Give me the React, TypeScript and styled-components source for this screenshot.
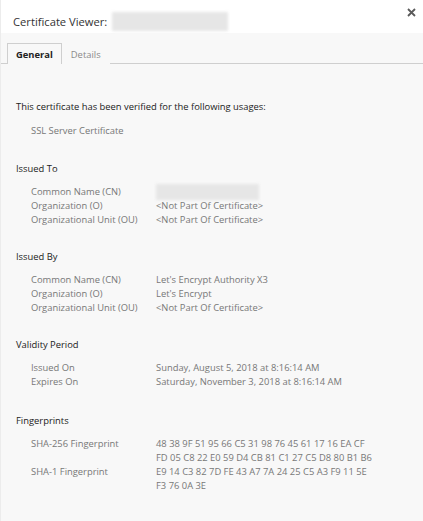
import styled, { createGlobalStyle } from 'styled-components';

const GlobalStyle = createGlobalStyle`
	html, body {
		margin: 0;
		padding: 0;
		background: #f8f8f8;
	}
	body {
		font-family: 'Open Sans', 'Noto Sans', sans-serif;
	}
`;

type Row = { label: string; value?: string; lines?: string[]; blurred?: boolean };
type Section = { title: string; rows: Row[] };

const sections: Section[] = [
	{
		title: 'Issued To',
		rows: [
			{ label: 'Common Name (CN)', blurred: true },
			{ label: 'Organization (O)', value: '<Not Part Of Certificate>' },
			{ label: 'Organizational Unit (OU)', value: '<Not Part Of Certificate>' },
		],
	},
	{
		title: 'Issued By',
		rows: [
			{ label: 'Common Name (CN)', value: "Let's Encrypt Authority X3" },
			{ label: 'Organization (O)', value: "Let's Encrypt" },
			{ label: 'Organizational Unit (OU)', value: '<Not Part Of Certificate>' },
		],
	},
	{
		title: 'Validity Period',
		rows: [
			{ label: 'Issued On', value: 'Sunday, August 5, 2018 at 8:16:14 AM' },
			{ label: 'Expires On', value: 'Saturday, November 3, 2018 at 8:16:14 AM' },
		],
	},
	{
		title: 'Fingerprints',
		rows: [
			{
				label: 'SHA-256 Fingerprint',
				lines: ['48 38 9F 51 95 66 C5 31 98 76 45 61 17 16 EA CF', 'FD 05 C8 22 E0 59 D4 CB 81 C1 27 C5 D8 80 B1 B6'],
			},
			{
				label: 'SHA-1 Fingerprint',
				lines: ['E9 14 C3 82 7D FE 43 A7 7A 24 25 C5 A3 F9 11 5E', 'F3 76 0A 3E'],
			},
		],
	},
];

export default function App() {
	return (
		<>
			<GlobalStyle />
			<Dialog>
				<Header>
					<Title>Certificate Viewer:</Title>
					<Blurred
						$width={116}
						$height={19}
					/>
					<CloseButton aria-label='close'>
						<svg
							width='9'
							height='9'
							viewBox='0 0 9 9'
						>
							<path
								d='M1 1L8 8M8 1L1 8'
								stroke='#5a5a5a'
								strokeWidth='1.8'
							/>
						</svg>
					</CloseButton>
				</Header>
				<TabBar>
					<Tab $active>General</Tab>
					<Tab>Details</Tab>
				</TabBar>
				<Content>
					<Intro>This certificate has been verified for the following usages:</Intro>
					<Usage>SSL Server Certificate</Usage>
					{sections.map((section) => (
						<SectionBlock key={section.title}>
							<SectionTitle>{section.title}</SectionTitle>
							<FieldGrid>
								{section.rows.map((row) => (
									<FieldRow key={row.label}>
										<FieldLabel>{row.label}</FieldLabel>
										<FieldValue>
											{row.blurred && (
												<Blurred
													$width={103}
													$height={16}
													$inline
												/>
											)}
											{row.value}
											{row.lines?.map((line) => <ValueLine key={line}>{line}</ValueLine>)}
										</FieldValue>
									</FieldRow>
								))}
							</FieldGrid>
						</SectionBlock>
					))}
				</Content>
			</Dialog>
		</>
	);
}

const Dialog = styled.div`
	width: 423px;
	height: 521px;
	background: #f8f8f8;
	border-left: 1px solid #ececec;
	box-sizing: border-box;
	overflow: hidden;
`;

const Header = styled.div`
	position: relative;
	height: 33px;
	background: #ffffff;
	display: flex;
	align-items: center;
	padding: 0 12px;
	gap: 5px;
`;

const Title = styled.h1`
	margin: 0;
	padding-top: 10px;
	font-size: 11.2px;
	font-weight: 400;
	color: #333;
`;

const Blurred = styled.span<{ $width: number; $height: number; $inline?: boolean }>`
	display: inline-block;
	width: ${(p) => p.$width}px;
	height: ${(p) => p.$height}px;
	margin: ${(p) => (p.$inline ? '-1px 0' : '10px 0 0')};
	background: #e6e6e6;
	filter: blur(1.5px);
`;

const CloseButton = styled.button`
	position: absolute;
	top: 7px;
	right: 6px;
	border: 0;
	background: none;
	padding: 0;
	width: 11px;
	height: 11px;
	display: flex;
	align-items: center;
	justify-content: center;
`;

const TabBar = styled.div`
	display: flex;
	align-items: flex-end;
	height: 31px;
	padding-left: 6px;
	border-bottom: 1px solid #cfcfcf;
	box-sizing: border-box;
`;

const Tab = styled.div<{ $active?: boolean }>`
	height: 21px;
	box-sizing: border-box;
	padding: 0 8px;
	display: flex;
	align-items: center;
	font-size: 9.4px;
	font-weight: ${(p) => (p.$active ? 700 : 400)};
	color: ${(p) => (p.$active ? '#222' : '#8a8a8a')};
	border: 1px solid ${(p) => (p.$active ? '#cfcfcf' : 'transparent')};
	border-bottom: 0;
	margin-bottom: -1px;
	background: #f8f8f8;
`;

const Content = styled.div`
	padding: 36px 15px 0;
	font-size: 9.4px;
`;

const Intro = styled.p`
	margin: 0;
	color: #222;
	line-height: 14px;
`;

const Usage = styled.p`
	margin: 10px 0 0 15px;
	color: #777;
	line-height: 14px;
`;

const SectionBlock = styled.section<{ $gap?: number }>`
	margin-top: 24px;
	& + & {
		margin-top: 23px;
	}
	&:last-child {
		margin-top: 25px;
	}
`;

const SectionTitle = styled.h2`
	margin: 0 0 9px;
	font-size: 9.4px;
	font-weight: 400;
	color: #222;
	line-height: 14px;
`;

const FieldGrid = styled.div`
	display: grid;
	grid-template-columns: 125px 1fr;
	padding-left: 15px;
	line-height: 14px;
	color: #777;
`;

const FieldRow = styled.div`
	display: contents;
`;

const FieldLabel = styled.div``;

const FieldValue = styled.div`
	min-height: 14px;
	display: flex;
	flex-direction: column;
	align-items: flex-start;
`;

const ValueLine = styled.span``;
